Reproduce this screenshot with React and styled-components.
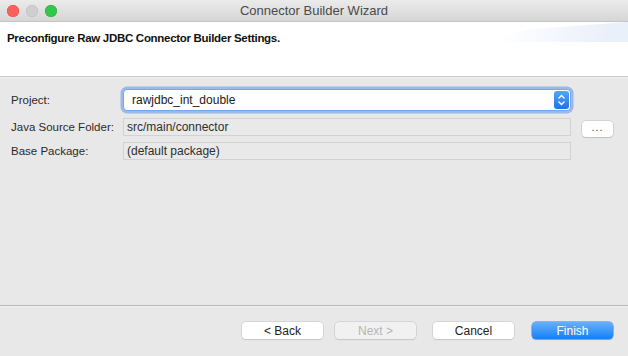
import React from "react";
import styled, { createGlobalStyle } from "styled-components";

const GlobalStyle = createGlobalStyle`
  html, body {
    margin: 0;
    padding: 0;
    background: #e8e8e8;
  }
  body {
    font-family: "Liberation Sans", Arial, sans-serif;
    font-size: 12px;
    color: #262626;
  }
`;

const Window = styled.div`
  width: 628px;
  height: 356px;
  display: flex;
  flex-direction: column;
  background: #e8e8e8;
  overflow: hidden;
`;

const TitleBar = styled.div`
  height: 21px;
  flex-shrink: 0;
  display: flex;
  align-items: center;
  position: relative;
  background: linear-gradient(#ebebeb, #d6d6d6);
  border-bottom: 1px solid #c4c4c4;
`;

const Lights = styled.div`
  display: flex;
  gap: 7px;
  padding-left: 7px;
`;

const Light = styled.span`
  width: 12px;
  height: 12px;
  border-radius: 50%;
  background: ${(p) => p.color};
  box-shadow: inset 0 0 0 0.5px ${(p) => p.edge};
`;

const Title = styled.div`
  position: absolute;
  left: 0;
  right: 0;
  text-align: center;
  font-size: 13px;
  color: #4a4a4a;
  pointer-events: none;
`;

const Header = styled.div`
  height: 54px;
  flex-shrink: 0;
  background: #fff;
  border-bottom: 1px solid #c8c8c8;
  position: relative;
  overflow: hidden;

  &::after {
    content: "";
    position: absolute;
    top: 0;
    right: 0;
    width: 150px;
    height: 20px;
    background: linear-gradient(100deg, rgba(255,255,255,0) 15%, #eaf0fa 85%);
    clip-path: polygon(35% 35%, 100% 0, 100% 100%, 0 100%);
  }
`;

const HeaderText = styled.div`
  padding: 10px 0 0 7px;
  font-weight: bold;
  font-size: 11.5px;
  letter-spacing: -0.3px;
  color: #111;
`;

const Form = styled.div`
  flex: 1;
  display: grid;
  grid-template-columns: 101px 448px 31px;
  grid-auto-rows: min-content;
  column-gap: 11px;
  padding: 11px 0 0 11px;
  border-top: 1px solid #f2f2f2;
`;

const Label = styled.div`
  display: flex;
  align-items: center;
  font-size: 11.5px;
  color: #2a2a2a;
  white-space: nowrap;
  height: ${(p) => p.h}px;
  margin-bottom: ${(p) => p.mb || 0}px;
`;

const Combo = styled.div`
  height: 20px;
  margin: 0 0 7px 0;
  border: 1px solid #7aa7e6;
  border-radius: 4px;
  background: #fff;
  box-shadow: 0 0 0 2.5px rgba(126, 170, 235, 0.75);
  display: flex;
  align-items: center;
  justify-content: space-between;
  padding-left: 8px;
  font-size: 12px;
  color: #1a1a1a;
`;

const ComboArrow = styled.div`
  width: 15px;
  height: 18px;
  margin-right: 1px;
  border-radius: 3px;
  background: linear-gradient(#5aa4f7, #1a75ea);
  display: flex;
  align-items: center;
  justify-content: center;
`;

const Field = styled.div`
  height: 16px;
  margin-bottom: ${(p) => p.mb || 0}px;
  border: 1px solid #d2d2d2;
  background: #e9e9e9;
  display: flex;
  align-items: center;
  padding-left: 3px;
  font-size: 12px;
  color: #2e2e2e;
`;

const Cell = styled.div``;

const SmallButton = styled.button`
  margin-top: 3px;
  width: 31px;
  height: 16px;
  padding: 0 0 4px;
  border: none;
  border-radius: 4px;
  background: #fff;
  box-shadow: 0 0 0 0.5px #bdbdbd, 0 1px 1px rgba(0, 0, 0, 0.15);
  font-family: inherit;
  font-size: 11px;
  color: #555;
  letter-spacing: 1px;
`;

const Footer = styled.div`
  height: 51px;
  flex-shrink: 0;
  box-sizing: border-box;
  border-top: 1px solid #b8b8b8;
  box-shadow: inset 0 1px 0 #f0f0f0;
  display: flex;
  justify-content: flex-end;
  align-items: flex-start;
  padding: 16px 15px 0 0;
  gap: 17px;
`;

const Group = styled.div`
  display: flex;
  gap: ${(p) => p.gap}px;
`;

const Button = styled.button`
  width: 81px;
  height: 17px;
  padding: 0;
  border: none;
  border-radius: 4px;
  font-family: inherit;
  font-size: 12px;
  background: ${(p) =>
    p.primary ? "linear-gradient(#68b0fa, #1480f8)" : p.disabled ? "#f1f1f1" : "#fff"};
  color: ${(p) => (p.primary ? "#fff" : p.disabled ? "#b5b5b5" : "#222")};
  box-shadow: ${(p) =>
    p.primary
      ? "0 0 0 0.5px #2e7fe6, 0 1px 1px rgba(0,0,0,0.15)"
      : "0 0 0 0.5px #c2c2c2, 0 1px 1px rgba(0,0,0,0.12)"};
`;

const StepperIcon = () => (
  <svg width="9" height="12" viewBox="0 0 9 12">
    <path d="M1.5 4.5 L4.5 1.5 L7.5 4.5" fill="none" stroke="#fff" strokeWidth="1.4" />
    <path d="M1.5 7.5 L4.5 10.5 L7.5 7.5" fill="none" stroke="#fff" strokeWidth="1.4" />
  </svg>
);

export default function App() {
  return (
    <>
      <GlobalStyle />
      <Window>
        <TitleBar>
          <Lights>
            <Light color="#fc605c" edge="#de4a45" />
            <Light color="#cfcfcf" edge="#bcbcbc" />
            <Light color="#34c84a" edge="#27a83a" />
          </Lights>
          <Title>Connector Builder Wizard</Title>
        </TitleBar>
        <Header>
          <HeaderText>Preconfigure Raw JDBC Connector Builder Settings.</HeaderText>
        </Header>
        <Form>
          <Label h={22} mb={7}>Project:</Label>
          <Combo>
            rawjdbc_int_double
            <ComboArrow>
              <StepperIcon />
            </ComboArrow>
          </Combo>
          <Cell />
          <Label h={18} mb={6}>Java Source Folder:</Label>
          <Field mb={6}>src/main/connector</Field>
          <Cell>
            <SmallButton>...</SmallButton>
          </Cell>
          <Label h={18}>Base Package:</Label>
          <Field>(default package)</Field>
          <Cell />
        </Form>
        <Footer>
          <Group gap={12}>
            <Button>&lt; Back</Button>
            <Button disabled>Next &gt;</Button>
          </Group>
          <Group gap={18}>
            <Button>Cancel</Button>
            <Button primary>Finish</Button>
          </Group>
        </Footer>
      </Window>
    </>
  );
}
